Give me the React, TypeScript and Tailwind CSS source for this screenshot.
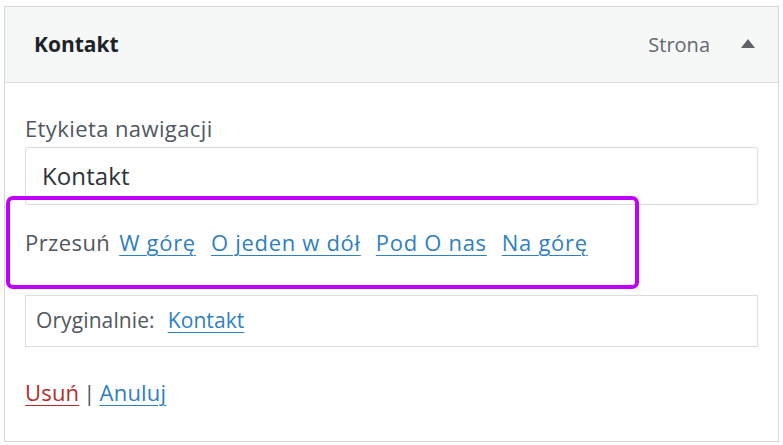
import React from "react";

export default function App() {
  const font = { fontFamily: '"Open Sans", "Noto Sans", sans-serif' };
  return (
    <div
      className="relative w-[783px] h-[445px] bg-white pt-[6px] pl-[4px]"
      style={font}
    >
      <div className="w-[775px] h-[436px] border border-[#d5d6d8] flex flex-col">
        <div className="h-[76px] shrink-0 bg-[#f6f7f7] border-b border-[#dcdcde] flex items-center justify-between pl-[29px] pr-[23px]">
          <span className="text-[21px] font-bold text-[#1d2327]">Kontakt</span>
          <div className="flex items-center gap-[31px]">
            <span className="text-[20px] text-[#646970]">Strona</span>
            <svg width="14" height="9" viewBox="0 0 14 9" className="-mt-[2px]">
              <polygon points="7,0 14,9 0,9" fill="#5f6368" />
            </svg>
          </div>
        </div>
        <div className="flex flex-col px-[20px] pt-[33px]">
          <label className="text-[22px] leading-[24px] text-[#50575e] tracking-[0.4px]">
            Etykieta nawigacji
          </label>
          <div className="mt-[7px] h-[58px] border border-[#dcdcde] rounded-[3px] flex items-center pl-[16px]">
            <span className="text-[24px] text-[#2c3338] tracking-[0.1px]">Kontakt</span>
          </div>
          <div className="h-[75px] flex items-center text-[22px] tracking-[0.4px]">
            <span className="text-[#50575e] mr-[9px]">Przesuń</span>
            <div className="flex items-center gap-[15px] tracking-[0.7px]">
              <a className="text-[#2f7fc1] underline underline-offset-[4px] decoration-1">W górę</a>
              <a className="text-[#2f7fc1] underline underline-offset-[4px] decoration-1">O jeden w dół</a>
              <a className="text-[#2f7fc1] underline underline-offset-[4px] decoration-1">Pod O nas</a>
              <a className="text-[#2f7fc1] underline underline-offset-[4px] decoration-1">Na górę</a>
            </div>
          </div>
          <div className="mt-[15px] h-[52px] border border-[#dcdcde] flex items-center pl-[10px] text-[21px] tracking-[0.1px]">
            <span className="text-[#50575e] mr-[13px]">Oryginalnie:</span>
            <a className="text-[#2f7fc1] underline underline-offset-[4px] decoration-1">Kontakt</a>
          </div>
          <div className="mt-[29px] flex items-center text-[22px] tracking-[0.2px]">
            <a className="text-[#b32d2e] underline underline-offset-[4px] decoration-1">Usuń</a>
            <span className="text-[#50575e] mx-[4px]">|</span>
            <a className="text-[#2f7fc1] underline underline-offset-[4px] decoration-1">Anuluj</a>
          </div>
        </div>
      </div>
      <div className="absolute left-[6px] top-[196px] w-[633px] h-[93px] border-[4px] border-[#bf00ff] rounded-[7px]" />
    </div>
  );
}
